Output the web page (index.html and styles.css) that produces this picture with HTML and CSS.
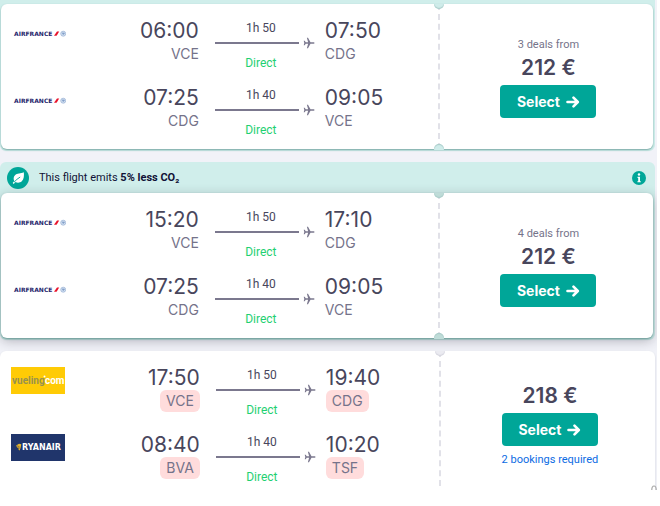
FILE: index.html
```html
<!DOCTYPE html>
<html lang="en">
<head>
<meta charset="utf-8">
<title>Flight results</title>
<link rel="stylesheet" href="styles.css">
</head>
<body>
<svg class="sprite" aria-hidden="true">
  <symbol id="plane" viewBox="0 0 12 12"><path d="M11.600 6c0 .5-.6.8-1.300.8H7.500L5 11.300H3.900L5.100 6.800H2.700L1.700 8.200H.7L1.300 6 .7 3.800h1l1 1.400h2.400L3.900.7H5l2.500 4.500h2.800c.7 0 1.300.3 1.300.8z"/></symbol>
  <symbol id="arrow" viewBox="0 0 14 12"><path d="M1.500 6h10M7.500 1.700 11.800 6l-4.300 4.300" fill="none" stroke="currentColor" stroke-width="2.600" stroke-linecap="round" stroke-linejoin="round"/></symbol>
  <symbol id="af-mark" viewBox="0 0 54 27">
    <path d="M42 15.800 45 11.400H47.200L44.600 15.800z" fill="#e8132b"/>
    <circle cx="51.200" cy="13.700" r="2.500" fill="#d5e2f2" stroke="#94add2" stroke-width=".7"/>
    <path d="M49.900 13.200h2.400l-1.300 1.600" fill="none" stroke="#5c80b8" stroke-width=".8"/>
  </symbol>
</svg>

<main class="results">
  <section class="offer offer-green offer-first">
    <article class="ticket">
      <div class="legs">
        <div class="leg">
          <svg class="logo" viewBox="0 0 54 27"><text x="2" y="16" class="logo-af">AIRFRANCE</text><use href="#af-mark"/></svg>
          <div class="stop from"><span class="time">06:00</span><span class="code">VCE</span></div>
          <div class="route"><span class="duration">1h 50</span><span class="path"><i></i><svg><use href="#plane"/></svg></span><span class="direct">Direct</span></div>
          <div class="stop"><span class="time">07:50</span><span class="code">CDG</span></div>
        </div>
        <div class="leg">
          <svg class="logo" viewBox="0 0 54 27"><text x="2" y="16" class="logo-af">AIRFRANCE</text><use href="#af-mark"/></svg>
          <div class="stop from"><span class="time">07:25</span><span class="code">CDG</span></div>
          <div class="route"><span class="duration">1h 40</span><span class="path"><i></i><svg><use href="#plane"/></svg></span><span class="direct">Direct</span></div>
          <div class="stop"><span class="time">09:05</span><span class="code">VCE</span></div>
        </div>
      </div>
      <div class="deal">
        <span class="count">3 deals from</span>
        <span class="price">212 €</span>
        <button type="button" class="select">Select <svg><use href="#arrow"/></svg></button>
      </div>
    </article>
  </section>

  <section class="offer offer-green">
    <header class="eco">
      <svg class="leaf" viewBox="0 0 22 22"><circle cx="11" cy="11" r="11" fill="#00a698"/><path d="M16.800 5.300c.4 3.500.2 7-2 9-1.900 1.700-4.500 1.700-6.300.8L6.700 17l-1-1 1.600-1.900c-1-2-.9-4.300.7-5.900 2-2 5.800-1.300 8.800-2.900z" fill="#fff"/><path d="M7 15.200c2-2.200 3.800-3.700 6.200-5.200" fill="none" stroke="#00a698" stroke-width=".9"/></svg>
      <p>This flight emits <strong>5% less CO₂</strong></p>
      <button type="button" class="info" aria-label="More information"><svg viewBox="0 0 14 14"><circle cx="7" cy="7" r="7" fill="#00a698"/><circle cx="7" cy="3.500" r="1.200" fill="#fff"/><path d="M5.500 5.800H8v4.400h.8v1.100H5.400v-1.100h.8V6.900h-.7z" fill="#fff"/></svg></button>
    </header>
    <article class="ticket raised">
      <div class="legs">
        <div class="leg">
          <svg class="logo" viewBox="0 0 54 27"><text x="2" y="16" class="logo-af">AIRFRANCE</text><use href="#af-mark"/></svg>
          <div class="stop from"><span class="time">15:20</span><span class="code">VCE</span></div>
          <div class="route"><span class="duration">1h 50</span><span class="path"><i></i><svg><use href="#plane"/></svg></span><span class="direct">Direct</span></div>
          <div class="stop"><span class="time">17:10</span><span class="code">CDG</span></div>
        </div>
        <div class="leg">
          <svg class="logo" viewBox="0 0 54 27"><text x="2" y="16" class="logo-af">AIRFRANCE</text><use href="#af-mark"/></svg>
          <div class="stop from"><span class="time">07:25</span><span class="code">CDG</span></div>
          <div class="route"><span class="duration">1h 40</span><span class="path"><i></i><svg><use href="#plane"/></svg></span><span class="direct">Direct</span></div>
          <div class="stop"><span class="time">09:05</span><span class="code">VCE</span></div>
        </div>
      </div>
      <div class="deal">
        <span class="count">4 deals from</span>
        <span class="price">212 €</span>
        <button type="button" class="select">Select <svg><use href="#arrow"/></svg></button>
      </div>
    </article>
  </section>

  <section class="offer">
    <article class="ticket plain">
      <div class="legs">
        <div class="leg">
          <svg class="logo" viewBox="0 0 54 27">
            <path d="M0 0h54v27H0z" fill="#ffcb05"/>
            <text x="1" y="17" class="logo-vy">vueling<tspan class="logo-vy-com" x="34">com</tspan></text>
            <circle cx="33.500" cy="9.500" r="1" fill="#fff"/>
          </svg>
          <div class="stop from"><span class="time">17:50</span><span class="code alert">VCE</span></div>
          <div class="route"><span class="duration">1h 50</span><span class="path"><i></i><svg><use href="#plane"/></svg></span><span class="direct">Direct</span></div>
          <div class="stop"><span class="time">19:40</span><span class="code alert">CDG</span></div>
        </div>
        <div class="leg">
          <svg class="logo" viewBox="0 0 54 27">
            <path d="M0 0h54v27H0z" fill="#20356b"/>
            <path d="M5.200 11.500 8 9.800l2.300.4-.6 3.300-1 3-1.200-.8.200-1.200-1.700-1.200z" fill="#e6b52e"/>
            <path d="M6 11.800l2.500 1M7 13.800l1.800.3" stroke="#6c5d3c" stroke-width=".7"/>
            <text x="11" y="16" class="logo-fr">RYANAIR</text>
          </svg>
          <div class="stop from"><span class="time">08:40</span><span class="code alert">BVA</span></div>
          <div class="route"><span class="duration">1h 40</span><span class="path"><i></i><svg><use href="#plane"/></svg></span><span class="direct">Direct</span></div>
          <div class="stop"><span class="time">10:20</span><span class="code alert">TSF</span></div>
        </div>
      </div>
      <div class="deal">
        <span class="price">218 €</span>
        <button type="button" class="select">Select <svg><use href="#arrow"/></svg></button>
        <a class="bookings" href="#">2 bookings required</a>
      </div>
    </article>
  </section>
  <svg class="top-mark" viewBox="0 0 6 5" aria-hidden="true"><path d="M.8 5C.8 2.500 1.600 1 3 1s2.200 1.500 2.200 4" fill="none" stroke="#aaa" stroke-width="1.200"/></svg>
</main>
</body>
</html>
```

FILE: styles.css
```css
* { box-sizing: border-box; }

body {
  margin: 0;
  background: #fff;
  color: #48465c;
  font-family: Roboto, "Liberation Sans", sans-serif;
  font-size: 11px;
  line-height: 16px;
}

.sprite { position: absolute; width: 0; height: 0; }

.results {
  position: relative;
  display: flex;
  flex-direction: column;
  gap: 11px;
  height: calc(100vh - 16px);
  margin-right: 3px;
  padding-right: 2px;
  overflow: hidden;
  background: #f1f2f8;
}

.offer { flex: none; }

.offer-green {
  padding: 0 2px 2px 1px;
  border-radius: 6px;
  background: #d0eeeb;
}

.offer-first {
  padding-top: 4px;
  border-radius: 0 0 6px 6px;
}

.eco {
  display: flex;
  align-items: center;
  gap: 10px;
  height: 31px;
  padding: 0 7px 0 6px;
  color: #111236;
}

.eco p { flex: 1; margin: 0; }
.eco strong { font-weight: 700; }
.leaf { width: 22px; height: 22px; }
.info { width: 14px; height: 14px; padding: 0; border: 0; background: none; }
.info svg { display: block; }

.ticket {
  --notch: #cfecea;
  --edge: #a9cbc8;
  position: relative;
  display: grid;
  grid-template-columns: 67fr 33fr;
  border-radius: 6px;
  background: #fff;
  box-shadow: 0 1px 2px #75a5a2;
}

.raised {
  --notch: #bfdcd8;
  box-shadow: 0 1px 2px #6c9c98, 0 3px 12px rgba(37, 32, 51, .3);
}

.plain {
  --notch: #ebebf1;
  --edge: #d3d3dc;
  box-shadow: 0 1px 2px #cccdd5;
}

.legs { padding: 6px 0 5px; }

.leg {
  display: grid;
  grid-template-columns: 54px 1fr 126px 113px;
  align-items: center;
  height: 67px;
  padding-left: 11px;
}

.logo { width: 54px; height: 27px; margin-bottom: 20px; }
.logo-af { font: bold 6px "DejaVu Sans", sans-serif; fill: #25256b; }
.logo-vy { font: bold 10px Roboto, sans-serif; fill: #98924f; }
.logo-vy-com { fill: #fff; }
.logo-fr { font: bold 8px "DejaVu Sans", sans-serif; fill: #fff; }

.stop {
  display: flex;
  flex-direction: column;
  align-items: flex-start;
  padding-bottom: 4px;
  font-family: Inter, "Liberation Sans", sans-serif;
}

.from { align-items: flex-end; }
.time { font-size: 21px; line-height: 24px; }
.code { color: #75738a; font-size: 14px; line-height: 22px; }
.alert { padding: 0 6px; border-radius: 6px; background: #ffdcdc; }

.route {
  display: flex;
  flex-direction: column;
  padding: 4px 10px 0 16px;
  font-size: 12px;
  text-align: center;
}

.duration, .direct { padding-right: 8px; }
.direct { color: #1fd072; }

.path {
  display: flex;
  align-items: center;
  gap: 4px;
  margin: 1px 0 6px;
}

.path i { flex: 1; height: 2px; background: #7b788e; }
.path svg { width: 12px; height: 12px; fill: #7b788e; }

.deal {
  position: relative;
  display: flex;
  flex-direction: column;
  align-items: center;
  justify-content: center;
  padding: 2px 0 0 4px;
  border-left: 2px dashed #e1e1e8;
}

.deal::before,
.deal::after {
  content: "";
  position: absolute;
  left: -6px;
  width: 10px;
  height: 5px;
  background: var(--notch);
}

.deal::before {
  top: 0;
  border-radius: 0 0 5px 5px;
  box-shadow: inset 0 -1px 1px var(--edge);
}

.deal::after {
  bottom: -1px;
  height: 6px;
  border-radius: 5px 5px 0 0;
  box-shadow: inset 0 1px 1px var(--edge);
}

.count { color: #75738a; }
.price { font: 600 21px/30px Inter, "Liberation Sans", sans-serif; }

.select {
  display: flex;
  align-items: center;
  justify-content: center;
  gap: 6px;
  width: 96px;
  height: 33px;
  margin-top: 2px;
  padding: 0;
  border: 0;
  border-radius: 4px;
  background: #00a698;
  color: #fff;
  font: 700 14px Inter, "Liberation Sans", sans-serif;
}

.select svg { width: 14px; height: 12px; }
.bookings { margin-top: 6px; color: #0c6be3; text-decoration: none; }

.top-mark {
  position: absolute;
  right: 0;
  bottom: 0;
  width: 6px;
  height: 5px;
}
```
